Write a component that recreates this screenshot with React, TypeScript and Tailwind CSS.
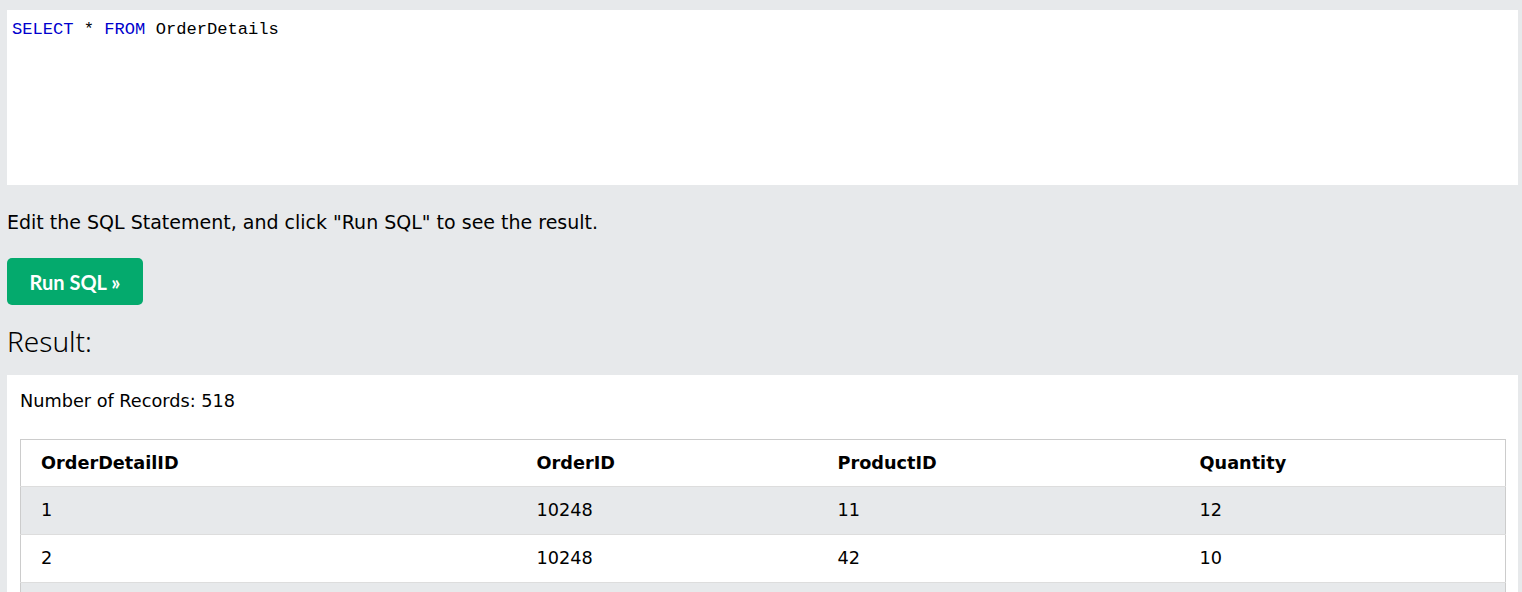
import React from "react";

const rows = [
  [1, 10248, 11, 12],
  [2, 10248, 42, 10],
  [3, 10248, 72, 5],
  [4, 10249, 14, 9],
  [5, 10249, 51, 40],
];

export default function App() {
  return (
    <div className="min-h-screen w-[1522px] bg-[#e7e9eb] pl-[7px] pr-[4px] pt-[10px] text-black font-['DejaVu_Sans',sans-serif]">
      {/* code editor */}
      <div className="h-[175px] bg-white pl-[5px] pt-[8px] font-['Liberation_Mono',monospace] text-[17.1px] leading-[24px]">
        <span className="text-[#0000cd]">SELECT</span> * <span className="text-[#0000cd]">FROM</span> OrderDetails
      </div>

      <p className="mt-[25px] text-[19px] leading-[24px]">
        Edit the SQL Statement, and click "Run SQL" to see the result.
      </p>

      <button className="mt-[24px] flex h-[47px] w-[136px] items-center justify-center rounded-[5px] bg-[#04aa6d] font-['Lato',sans-serif] text-[20px] font-bold text-white">
        Run SQL »
      </button>

      <h2 className="mt-[8px] font-['Noto_Sans',sans-serif] text-[28px] font-light leading-[56px]">
        Result:
      </h2>

      <div className="mt-[6px] bg-white px-[13px] pt-[14px]">
        <div className="text-[17.7px] leading-[24px]">Number of Records: 518</div>
        <table className="mt-[26px] w-[1485px] table-fixed border-collapse border border-[#cccccc] text-[17.7px]">
          <colgroup>
            <col className="w-[496px]" />
            <col className="w-[301px]" />
            <col className="w-[362px]" />
            <col className="w-[326px]" />
          </colgroup>
          <thead>
            <tr className="h-[47px] border-b border-[#dddddd]">
              {["OrderDetailID", "OrderID", "ProductID", "Quantity"].map((h) => (
                <th key={h} className="pl-[20px] text-left font-bold">
                  {h}
                </th>
              ))}
            </tr>
          </thead>
          <tbody>
            {rows.map((r, i) => (
              <tr
                key={i}
                className={`h-[48px] border-b border-[#dddddd] ${i % 2 === 0 ? "bg-[#e7e9eb]" : "bg-white"}`}
              >
                {r.map((c, j) => (
                  <td key={j} className="pl-[20px]">
                    {c}
                  </td>
                ))}
              </tr>
            ))}
          </tbody>
        </table>
      </div>
    </div>
  );
}
